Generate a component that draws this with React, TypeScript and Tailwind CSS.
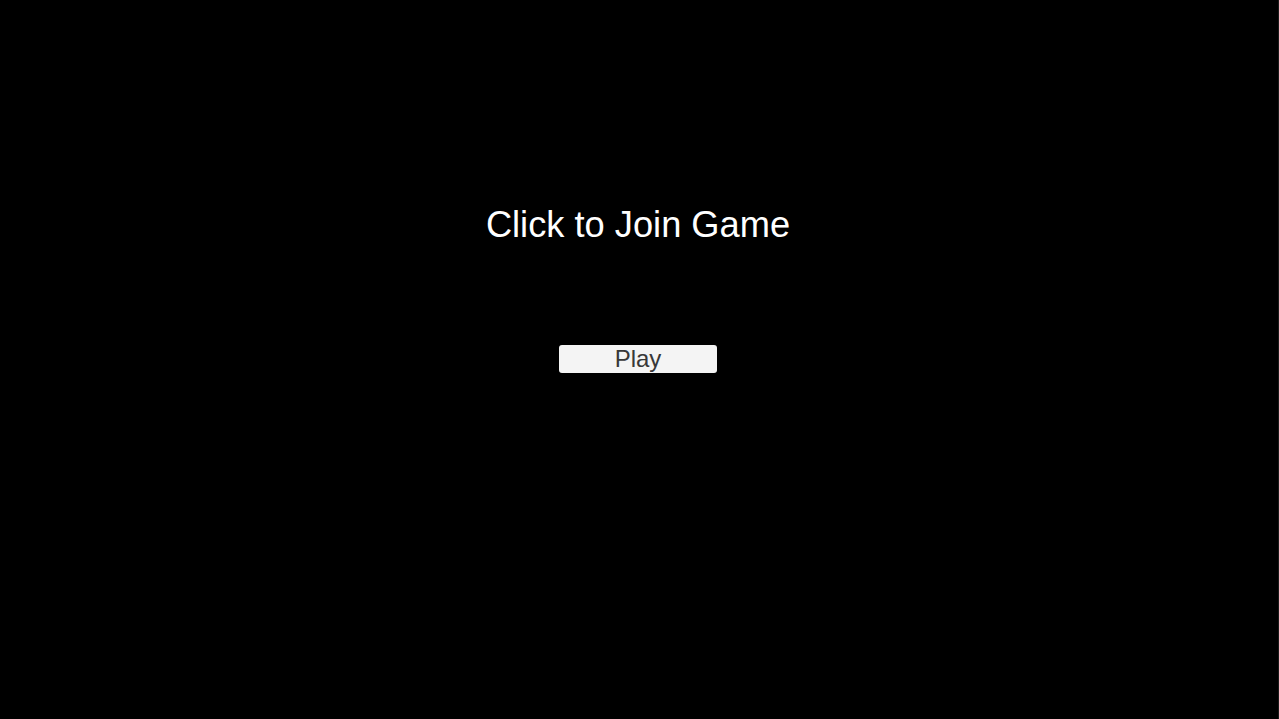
export default function App() {
  return (
    <div
      className="flex h-screen w-full flex-col items-center border-r border-[#1c1c1c] bg-black pr-[2px]"
      style={{ fontFamily: '"Liberation Sans", Arial, sans-serif' }}
    >
      <h1 className="pt-[207px] text-[36.25px] leading-none font-normal text-white">
        Click to Join Game
      </h1>
      <button className="mt-[102px] flex h-[28px] w-[158px] items-center justify-center rounded-[3px] bg-[#f4f4f4] text-[24px] leading-none text-[#383838]">
        Play
      </button>
    </div>
  );
}
